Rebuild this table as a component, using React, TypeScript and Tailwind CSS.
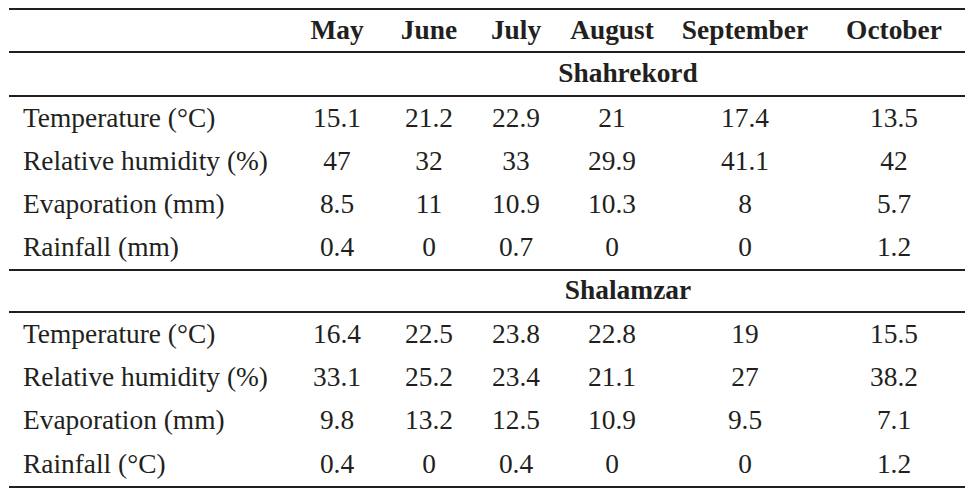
const months = ["May", "June", "July", "August", "September", "October"];

type Row = { label: string; values: string[] };

const sections: { name: string; rows: Row[] }[] = [
  {
    name: "Shahrekord",
    rows: [
      { label: "Temperature (°C)", values: ["15.1", "21.2", "22.9", "21", "17.4", "13.5"] },
      { label: "Relative humidity (%)", values: ["47", "32", "33", "29.9", "41.1", "42"] },
      { label: "Evaporation (mm)", values: ["8.5", "11", "10.9", "10.3", "8", "5.7"] },
      { label: "Rainfall (mm)", values: ["0.4", "0", "0.7", "0", "0", "1.2"] },
    ],
  },
  {
    name: "Shalamzar",
    rows: [
      { label: "Temperature (°C)", values: ["16.4", "22.5", "23.8", "22.8", "19", "15.5"] },
      { label: "Relative humidity (%)", values: ["33.1", "25.2", "23.4", "21.1", "27", "38.2"] },
      { label: "Evaporation (mm)", values: ["9.8", "13.2", "12.5", "10.9", "9.5", "7.1"] },
      { label: "Rainfall (°C)", values: ["0.4", "0", "0.4", "0", "0", "1.2"] },
    ],
  },
];

const grid = "grid grid-cols-[282px_92px_92px_82px_110px_156px_142px] items-center";

function Rule() {
  return <div className="h-[2px] bg-[#231f20]" />;
}

export default function App() {
  return (
    <div className="w-[972px] h-[503px] bg-white text-[#231f20] text-[27.4px] leading-none font-[family-name:Liberation_Serif,Times_New_Roman,serif]">
      <div className="ml-[9px] pt-[8px] w-[956px]">
        <Rule />
        <div className={`${grid} h-[41px] font-bold`}>
          <div />
          {months.map((m) => (
            <div key={m} className="text-center">{m}</div>
          ))}
        </div>
        {sections.map((s, si) => (
          <div key={s.name}>
            <Rule />
            <div className={`${grid} ${si === 0 ? "h-[42px]" : "h-[40px]"} font-bold`}>
              <div />
              <div className="col-span-6 text-center">{s.name}</div>
            </div>
            <Rule />
            {s.rows.map((r) => (
              <div key={r.label} className={`${grid} ${si === 0 ? "h-[43px]" : "h-[43.25px]"}`}>
                <div className="pl-[14px] whitespace-nowrap">{r.label}</div>
                {r.values.map((v, i) => (
                  <div key={i} className="text-center">{v}</div>
                ))}
              </div>
            ))}
          </div>
        ))}
        <Rule />
      </div>
    </div>
  );
}
